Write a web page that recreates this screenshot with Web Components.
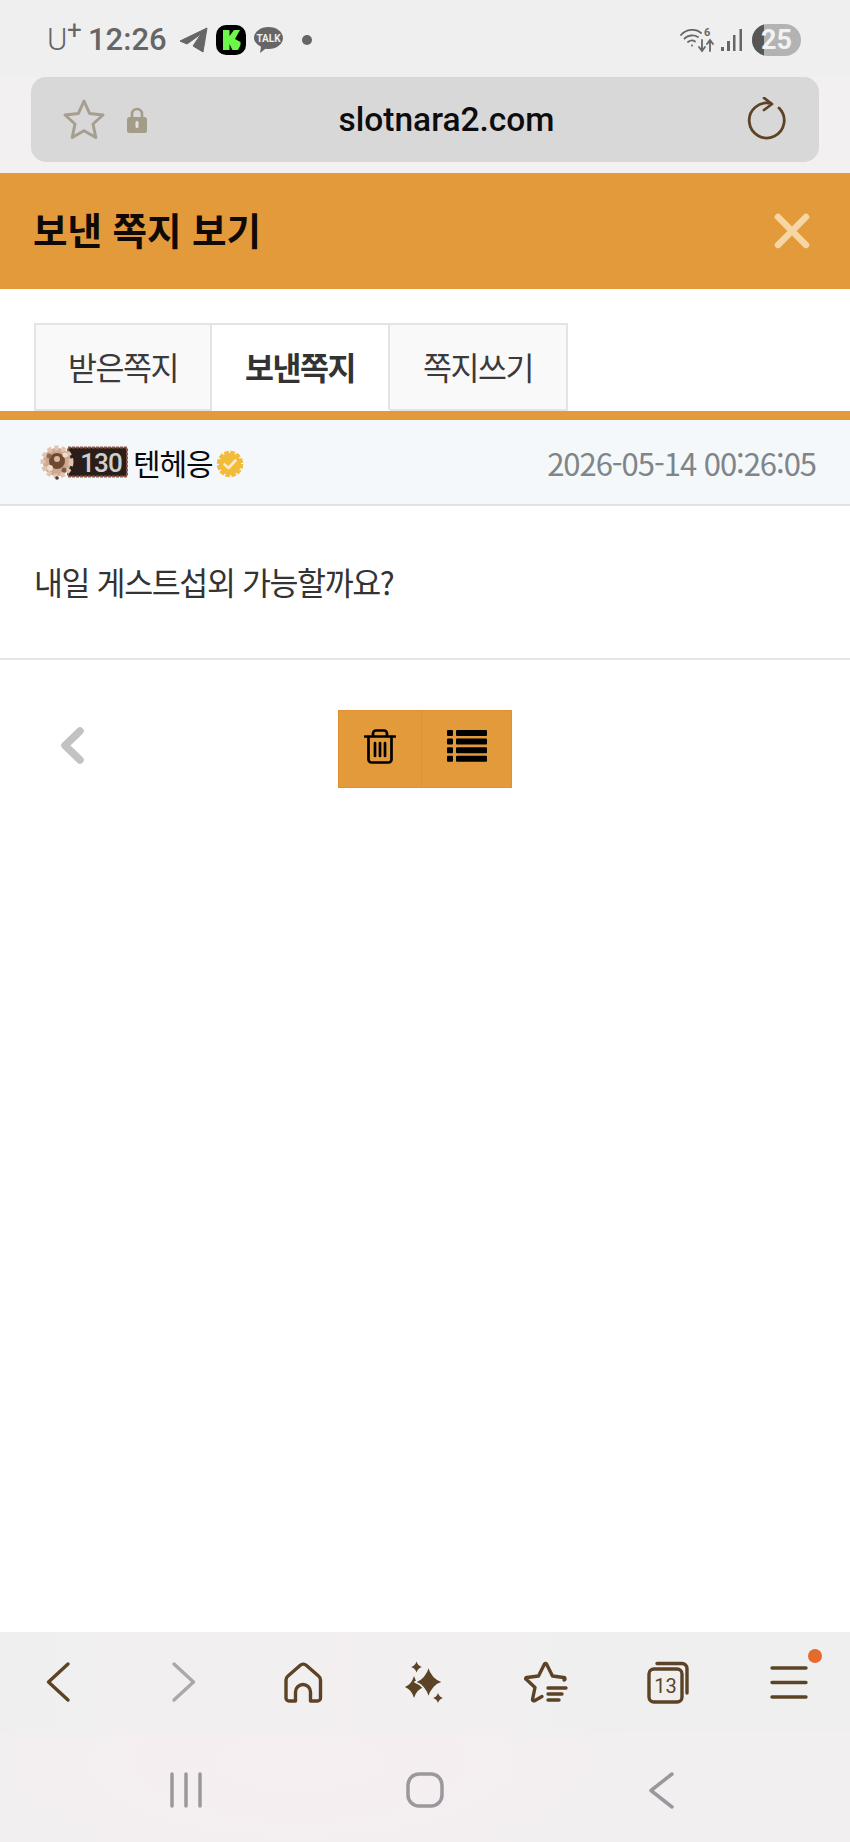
<!DOCTYPE html>
<html lang="ko">
<head>
<meta charset="utf-8">
<title>보낸 쪽지 보기</title>
<style>
  html, body {
    margin: 0;
    height: 100%;
  }
  body {
    display: flex;
    flex-direction: column;
    height: 1842px;
    background: #fff;
    overflow: hidden;
    font-family: "Noto Sans CJK KR", "Noto Sans", sans-serif;
  }
  .fill {
    flex: 1;
  }
</style>
</head>
<body>
  <status-bar></status-bar>
  <url-bar>slotnara2.com</url-bar>
  <note-header>보낸 쪽지 보기</note-header>
  <note-tabs>
    <note-tab>받은쪽지</note-tab>
    <note-tab active>보낸쪽지</note-tab>
    <note-tab>쪽지쓰기</note-tab>
  </note-tabs>
  <note-meta name="텐헤응" date="2026-05-14 00:26:05"></note-meta>
  <note-body>내일 게스트섭외 가능할까요?</note-body>
  <note-actions></note-actions>
  <div class="fill"></div>
  <browser-nav></browser-nav>
  <system-nav></system-nav>

<script>
class StatusBar extends HTMLElement {
  constructor() {
    super();
    this.attachShadow({ mode: 'open' });
  }

  connectedCallback() {
    this.shadowRoot.innerHTML = `
      <style>
        :host {
          display: flex;
          justify-content: space-between;
          align-items: center;
          box-sizing: border-box;
          height: 77px;
          padding: 2px 49px 0 47px;
          background: #f0eff0;
          color: #666;
          font-family: Roboto, "Noto Sans", sans-serif;
        }
        .group {
          display: flex;
          align-items: center;
        }
        .carrier {
          font-size: 31px;
          font-weight: 300;
          position: relative;
          width: 41px;
        }
        .carrier sup {
          position: absolute;
          left: 20px;
          top: -4px;
          font-size: 26px;
          font-weight: 400;
          line-height: 1;
        }
        .time {
          font-size: 31px;
          font-weight: 500;
          margin-right: 12px;
        }
        svg {
          display: block;
        }
        .battery {
          position: relative;
          width: 49px;
          height: 32px;
          border-radius: 16px;
          overflow: hidden;
          background: #b3b3b3;
          margin-left: 9px;
          color: #f2f2f2;
          font-size: 27px;
          font-weight: 700;
          line-height: 32px;
          text-align: right;
          padding-right: 9px;
          box-sizing: border-box;
        }
        .battery::before {
          content: "";
          position: absolute;
          left: 0;
          top: 0;
          bottom: 0;
          width: 12px;
          background: #565656;
        }
        .battery span {
          position: relative;
        }
      </style>
      <div class="group">
        <span class="carrier">U<sup>+</sup></span>
        <span class="time">12:26</span>
        <svg width="29" height="26" viewBox="0 0 29 26" style="margin-right:8px">
          <path d="M1 14 28 1 24 25 14 19 22 7 8 17Z" fill="#666" stroke="#666" stroke-width="1" stroke-linejoin="round"/>
        </svg>
        <svg width="30" height="30" viewBox="0 0 30 30" style="margin-right:8px">
          <rect width="30" height="30" rx="10" fill="#000"/>
          <path d="M7 5h6.5v6L18 5h6l-5 9 5.5 3v3l-2.500 5h-5.500l-3-6v6H7Z" fill="#6cf74a"/>
        </svg>
        <svg width="29" height="28" viewBox="0 0 29 28">
          <path d="M14.5 1C22.5 1 29 5.800 29 12S22.5 23 14.5 23c-1 0-2 0-3-.3L6 27l1-6.300C3 18.600 0 15.500 0 12 0 5.800 6.500 1 14.500 1Z" fill="#666"/>
          <text x="14.5" y="16" text-anchor="middle" font-size="10" font-weight="700" fill="#eee" font-family="Roboto, sans-serif">TALK</text>
        </svg>
        <svg width="10" height="10" viewBox="0 0 10 10" style="margin-left:19px">
          <circle cx="5" cy="5" r="5" fill="#666"/>
        </svg>
      </div>
      <div class="group">
        <svg width="34" height="26" viewBox="0 0 34 26" fill="none" stroke="#666" stroke-width="1.8" stroke-linecap="round">
          <path d="M1 8C6 2 16 1 21 6"/>
          <path d="M4.500 11.500C8 8 14 7.500 18 10"/>
          <path d="M8 15c2.500-2 5-2 7-.5"/>
          <circle cx="12" cy="18.5" r="1" fill="#666" stroke="none"/>
          <text x="24" y="9" font-size="11" font-weight="700" fill="#666" stroke="none" font-family="Roboto, sans-serif">6</text>
          <path d="M22 13v10M19 20l3 4 3-4"/>
          <path d="M30 24V14M27 17l3-4 3 4"/>
        </svg>
        <svg width="22" height="24" viewBox="0 0 22 24" fill="#666" style="margin-left:7px">
          <rect x="0" y="19" width="3" height="4"/>
          <rect x="6" y="13" width="3" height="10"/>
          <rect x="12" y="7" width="2.5" height="16"/>
          <rect x="18.5" y="1" width="2.5" height="22"/>
        </svg>
        <div class="battery"><span>25</span></div>
      </div>
    `;
  }
}

class UrlBar extends HTMLElement {
  constructor() {
    super();
    this.attachShadow({ mode: 'open' });
  }

  connectedCallback() {
    this.shadowRoot.innerHTML = `
      <style>
        :host {
          display: block;
          padding: 0 31px 11px;
          background: #f2f0f1;
        }
        .bar {
          display: flex;
          align-items: center;
          height: 85px;
          padding: 0 33px 0 31px;
          border-radius: 15px;
          background: #d9d8d9;
        }
        .address {
          flex: 1;
          text-align: center;
          color: #0d0d0d;
          font-family: Roboto, "Noto Sans", sans-serif;
          font-size: 33.5px;
          font-weight: 500;
        }
        svg {
          display: block;
        }
      </style>
      <div class="bar">
        <svg width="44" height="44" viewBox="0 0 44 44" fill="none" stroke="#a69f90" stroke-width="3" stroke-linejoin="round">
          <path d="M22 3 27.6 15.4 41 17 31 26 33.8 39.5 22 32.8 10.2 39.5 13 26 3 17 16.4 15.4Z"/>
        </svg>
        <svg width="20" height="28" viewBox="0 0 20 28" style="margin-left:21px">
          <path d="M5 12V8a5 5 0 0 1 10 0v4" fill="none" stroke="#a39c88" stroke-width="2.6"/>
          <rect y="11" width="20" height="16" rx="2.5" fill="#a39c88"/>
          <rect x="8.5" y="15" width="3" height="7" rx="1.5" fill="#e4e1da"/>
        </svg>
        <div class="address"><slot></slot></div>
        <svg width="40" height="46" viewBox="0 0 40 46" fill="none" stroke="#5c4326" stroke-width="2.8" stroke-linecap="round" stroke-linejoin="round">
          <path d="M25 6.500A17.500 17.500 0 1 0 33 11"/>
          <path d="M18 1l8 6-8 6"/>
        </svg>
      </div>
    `;
  }
}

class NoteHeader extends HTMLElement {
  constructor() {
    super();
    this.attachShadow({ mode: 'open' });
  }

  connectedCallback() {
    this.shadowRoot.innerHTML = `
      <style>
        :host {
          display: flex;
          justify-content: space-between;
          align-items: center;
          height: 116px;
          padding: 0 40px 0 33px;
          background: #e39a3b;
          color: #0f0a05;
          font-size: 37.5px;
          font-weight: 700;
        }
        span {
          padding-bottom: 6px;
        }
        svg {
          display: block;
        }
      </style>
      <span><slot></slot></span>
      <svg width="36" height="36" viewBox="0 0 36 36" stroke="#f7d6a6" stroke-width="6.5" stroke-linecap="round">
        <path d="M4 4 32 32M32 4 4 32"/>
      </svg>
    `;
  }
}

class NoteTabs extends HTMLElement {
  constructor() {
    super();
    this.attachShadow({ mode: 'open' });
  }

  connectedCallback() {
    this.shadowRoot.innerHTML = `
      <style>
        :host {
          display: flex;
          padding: 34px 0 0 34px;
          border-bottom: 9px solid #e39a3b;
          background: #fff;
        }
      </style>
      <slot></slot>
    `;
  }
}

class NoteTab extends HTMLElement {
  constructor() {
    super();
    this.attachShadow({ mode: 'open' });
  }

  connectedCallback() {
    this.shadowRoot.innerHTML = `
      <style>
        :host {
          display: flex;
          justify-content: center;
          align-items: center;
          box-sizing: border-box;
          width: 178px;
          height: 88px;
          padding-bottom: 3px;
          border: 2px solid #e5e4e4;
          border-left: 0;
          background: #faf9f9;
          color: #3a3a3a;
          font-size: 31.5px;
          letter-spacing: -1.5px;
        }
        :host(:first-child) {
          border-left: 2px solid #e5e4e4;
        }
        :host([active]) {
          background: #fff;
          border-bottom-color: #fff;
          color: #333;
          font-weight: 700;
        }
      </style>
      <slot></slot>
    `;
  }
}

class NoteMeta extends HTMLElement {
  constructor() {
    super();
    this.attachShadow({ mode: 'open' });
  }

  connectedCallback() {
    this.shadowRoot.innerHTML = `
      <style>
        :host {
          display: flex;
          align-items: center;
          justify-content: space-between;
          height: 84px;
          padding: 0 34px 0 40px;
          border-bottom: 2px solid #e2e2e2;
          background: #f5f8fa;
        }
        .who {
          display: flex;
          align-items: center;
          color: #0a0a0a;
          font-size: 30px;
          letter-spacing: -1.1px;
        }
        .date {
          color: #7f8588;
          font-size: 31px;
          letter-spacing: -1.03px;
        }
        svg {
          display: block;
        }
      </style>
      <div class="who">
        <!-- level badge: speckled gear beside a dark plate -->
        <svg width="88" height="38" viewBox="0 0 88 38" style="margin-right:5px">
          <rect x="28" y="4.5" width="59" height="29" fill="#2a1e1a" stroke="#8a5a48" stroke-width="2" stroke-dasharray="3 1"/>
          <circle cx="17" cy="19" r="14" fill="#cfa98f" stroke="#e0c4af" stroke-width="5" stroke-dasharray="4 3"/>
          <circle cx="17" cy="18" r="8" fill="#6e4a35"/>
          <circle cx="17" cy="16" r="3" fill="#d8b79d"/>
          <circle cx="9" cy="13" r="2.5" fill="#8c6a52"/>
          <circle cx="25" cy="12" r="2.5" fill="#f0dccb"/>
          <circle cx="10" cy="25" r="3" fill="#f0dccb"/>
          <circle cx="24" cy="27" r="2.5" fill="#7d5a44"/>
          <circle cx="17" cy="35" r="1.8" fill="#4a3a30"/>
          <text x="61" y="28.5" text-anchor="middle" font-size="26" font-weight="500" fill="#cfcfcf" font-family="Roboto, sans-serif" letter-spacing="-1">130</text>
        </svg>
        <span>${this.getAttribute('name')}</span>
        <svg width="28" height="28" viewBox="0 0 28 28" style="margin-left:3px;margin-top:3px">
          <circle cx="14" cy="14" r="11" fill="#f2bb3a"/>
          <circle cx="14" cy="14" r="11.5" fill="none" stroke="#f2bb3a" stroke-width="3.5" stroke-dasharray="4.5 1.52"/>
          <path d="M8.5 14.5 12.5 18 19.5 10.5" fill="none" stroke="#fbeccb" stroke-width="2.6" stroke-linecap="round" stroke-linejoin="round"/>
        </svg>
      </div>
      <span class="date">${this.getAttribute('date')}</span>
    `;
  }
}

class NoteBody extends HTMLElement {
  constructor() {
    super();
    this.attachShadow({ mode: 'open' });
  }

  connectedCallback() {
    this.shadowRoot.innerHTML = `
      <style>
        :host {
          display: flex;
          align-items: center;
          box-sizing: border-box;
          height: 154px;
          padding: 0 34px 2px;
          border-bottom: 2px solid #e5e5e5;
          color: #333;
          font-size: 31.5px;
          letter-spacing: -1.4px;
        }
      </style>
      <slot></slot>
    `;
  }
}

class NoteActions extends HTMLElement {
  constructor() {
    super();
    this.attachShadow({ mode: 'open' });
  }

  connectedCallback() {
    this.shadowRoot.innerHTML = `
      <style>
        :host {
          display: grid;
          grid-template-columns: 1fr auto 1fr;
          align-items: center;
          padding-top: 50px;
        }
        .prev {
          padding: 0 0 8px 60px;
        }
        .buttons {
          display: flex;
          border: 1px solid #e08f33;
          background: #e39a3b;
        }
        .btn {
          display: flex;
          justify-content: center;
          align-items: center;
          box-sizing: border-box;
          height: 76px;
          padding-bottom: 6px;
        }
        .btn + .btn {
          border-left: 1px solid #e08f33;
        }
        svg {
          display: block;
        }
      </style>
      <div class="prev">
        <svg width="24" height="37" viewBox="0 0 24 37" fill="none" stroke="#c2c2c2" stroke-width="7.5" stroke-linecap="round" stroke-linejoin="round">
          <path d="M20 4 5 18.5 20 33"/>
        </svg>
      </div>
      <div class="buttons">
        <div class="btn" style="width:82px">
          <svg width="32" height="35" viewBox="0 0 32 35" fill="none" stroke="#000" stroke-width="2.7" stroke-linecap="round" stroke-linejoin="round">
            <path d="M1 7.5H31"/>
            <path d="M9 7V4.500A3 3 0 0 1 12 1.500H20A3 3 0 0 1 23 4.500V7"/>
            <path d="M4.500 8V30.500A3 3 0 0 0 7.500 33.500H24.500A3 3 0 0 0 27.500 30.500V8"/>
            <path d="M11 14V27M16 14V27M21 14V27"/>
          </svg>
        </div>
        <div class="btn" style="width:90px">
          <svg width="40" height="32" viewBox="0 0 40 32" fill="#000">
            <rect y="0" width="6" height="6" rx="1"/><rect x="9" y="0" width="31" height="6" rx="1"/>
            <rect y="8.6" width="6" height="6" rx="1"/><rect x="9" y="8.6" width="31" height="6" rx="1"/>
            <rect y="17.2" width="6" height="6" rx="1"/><rect x="9" y="17.2" width="31" height="6" rx="1"/>
            <rect y="25.8" width="6" height="6" rx="1"/><rect x="9" y="25.8" width="31" height="6" rx="1"/>
          </svg>
        </div>
      </div>
    `;
  }
}

class BrowserNav extends HTMLElement {
  constructor() {
    super();
    this.attachShadow({ mode: 'open' });
  }

  connectedCallback() {
    this.shadowRoot.innerHTML = `
      <style>
        :host {
          display: grid;
          grid-template-columns: repeat(7, 1fr);
          justify-items: center;
          height: 100px;
          padding-top: 26px;
          box-sizing: border-box;
          background: linear-gradient(90deg, #f0eff0 0%, #f3eff1 40%, #f0eff0 70%);
        }
        svg {
          display: block;
          overflow: visible;
          fill: none;
          stroke: #5c4326;
          stroke-width: 3.4;
          stroke-linecap: round;
          stroke-linejoin: round;
        }
      </style>
      <svg width="48" height="48" viewBox="0 0 48 48"><path d="M31 6 11.500 24 31 42"/></svg>
      <svg width="48" height="48" viewBox="0 0 48 48" style="stroke:#aaa8a8"><path d="M16 6 35.500 24 16 42"/></svg>
      <svg width="48" height="48" viewBox="0 0 48 48">
        <path d="M15.500 43H9.500A3 3 0 0 1 6 40V22A5 5 0 0 1 8 18L20 7.500A5 5 0 0 1 26.500 7.500L38.500 18A5 5 0 0 1 40.500 22V40A3 3 0 0 1 37 43H30.500V34A7.500 7.500 0 0 0 15.500 34Z"/>
      </svg>
      <svg width="48" height="48" viewBox="0 0 48 48" style="stroke:none;fill:#5c4326">
        <path d="M13 18Q15.500 26.500 23 29 15.500 31.500 13 40 10.500 31.500 4 29 10.500 26.500 13 18Z"/>
        <path d="M27.500 8Q31 20.500 42 24 31 27.500 27.500 40 24 27.500 14 24 24 20.500 27.500 8Z" stroke="#f1eff0" stroke-width="1.6"/>
        <path d="M15.500 3.500Q16.800 7.700 21 9 16.800 10.300 15.500 14.500 14.200 10.300 10 9 14.200 7.700 15.500 3.500Z"/>
        <path d="M37 35Q38.200 38.800 42 40 38.200 41.200 37 45 35.800 41.200 32 40 35.800 38.800 37 35Z"/>
      </svg>
      <svg width="48" height="48" viewBox="0 0 48 48">
        <path d="M20 38.500 12.500 42.800A1.500 1.500 0 0 1 10.500 41.500L13 29.500 4.500 21.500A1 1 0 0 1 5 19.500L16.500 18 22.500 6A1.200 1.200 0 0 1 24.500 6L30.500 18 41.500 19.500A1 1 0 0 1 42 22"/>
        <path d="M26 30H44M26 36H40M26 42H37"/>
      </svg>
      <svg width="48" height="48" viewBox="0 0 48 48">
        <rect x="5" y="11" width="33" height="33" rx="5"/>
        <path d="M13 5.500H38A5 5 0 0 1 43 10.500V35"/>
        <text x="21.5" y="35" text-anchor="middle" font-size="20" fill="#5c4326" stroke="none" font-family="Roboto, sans-serif">13</text>
      </svg>
      <svg width="48" height="48" viewBox="0 0 48 48">
        <path d="M7 10H41M7 24.500H41M7 39H41"/>
        <circle cx="50" cy="-2" r="7" fill="#e46b2a" stroke="none"/>
      </svg>
    `;
  }
}

class SystemNav extends HTMLElement {
  constructor() {
    super();
    this.attachShadow({ mode: 'open' });
  }

  connectedCallback() {
    this.shadowRoot.innerHTML = `
      <style>
        :host {
          display: grid;
          grid-template-columns: repeat(3, 1fr);
          justify-items: center;
          height: 110px;
          padding: 34px 67px 0;
          box-sizing: border-box;
          background: radial-gradient(ellipse 340px 120px at 300px 30px, #f6eef2 0%, #f2eff0 100%);
        }
        svg {
          display: block;
          fill: none;
          stroke: #9a989c;
          stroke-width: 3.5;
          stroke-linecap: round;
          stroke-linejoin: round;
        }
      </style>
      <svg width="48" height="48" viewBox="0 0 48 48"><path d="M10 8V40M24 8V40M38 8V40"/></svg>
      <svg width="48" height="48" viewBox="0 0 48 48"><rect x="7" y="8" width="34" height="32" rx="11"/></svg>
      <svg width="48" height="48" viewBox="0 0 48 48"><path d="M32 8 11 24.500 32 41"/></svg>
    `;
  }
}

customElements.define('status-bar', StatusBar);
customElements.define('url-bar', UrlBar);
customElements.define('note-header', NoteHeader);
customElements.define('note-tabs', NoteTabs);
customElements.define('note-tab', NoteTab);
customElements.define('note-meta', NoteMeta);
customElements.define('note-body', NoteBody);
customElements.define('note-actions', NoteActions);
customElements.define('browser-nav', BrowserNav);
customElements.define('system-nav', SystemNav);
</script>
</body>
</html>
